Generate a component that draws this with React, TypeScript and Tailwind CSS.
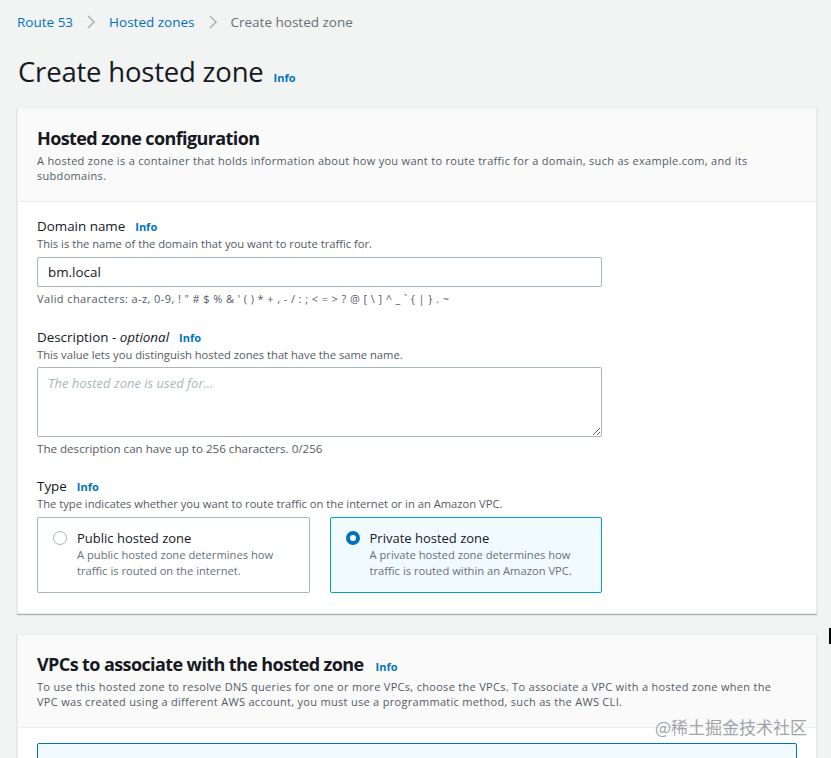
import React from "react";

const font = { fontFamily: '"Open Sans", "Noto Sans", sans-serif' };

function Info({ className = "" }: { className?: string }) {
  return <span className={`ml-[10px] text-[11px] font-bold text-[#0073bb] ${className}`}>Info</span>;
}

function Chevron() {
  return (
    <svg width="12" height="16" viewBox="0 0 12 16" className="mx-[12px]">
      <path d="M3 2 L9 8 L3 14" fill="none" stroke="#aab7b8" strokeWidth="1.6" />
    </svg>
  );
}

function Radio({ checked }: { checked: boolean }) {
  if (checked) {
    return <span className="block h-[14px] w-[14px] shrink-0 rounded-full border-[4px] border-[#0073bb] bg-white" />;
  }
  return <span className="block h-[14px] w-[14px] shrink-0 rounded-full border border-[#aab7b8] bg-white" />;
}

function Tile({ title, desc, checked }: { title: string; desc: string; checked: boolean }) {
  return (
    <div
      className={`flex h-[76px] gap-[10px] rounded-[2px] border px-[15px] pt-[12px] ${
        checked ? "border-[#00a1c9] bg-[#f1faff]" : "border-[#aab7b8] bg-white"
      }`}
    >
      <div className="pt-[1px]">
        <Radio checked={checked} />
      </div>
      <div>
        <div className="text-[13px] leading-[16px] text-[#16191f]">{title}</div>
        <div className="mt-[1px] w-[225px] text-[11.2px] leading-[16px] text-[#687078]">{desc}</div>
      </div>
    </div>
  );
}

export default function App() {
  return (
    <div className="relative min-h-[758px] overflow-hidden bg-[#f2f3f3] pl-[17px] pr-[14px] text-[#16191f]" style={font}>
      {/* breadcrumb */}
      <div className="flex h-[18px] items-center pt-[13px] text-[13.5px] leading-[18px]" style={{ boxSizing: "content-box" }}>
        <span className="text-[#0073bb]">Route 53</span>
        <Chevron />
        <span className="text-[#0073bb]">Hosted zones</span>
        <Chevron />
        <span className="text-[#687078]">Create hosted zone</span>
      </div>

      <div className="mt-[23px] flex h-[36px] items-baseline pl-[1px]">
        <h1 className="text-[27.5px] leading-[36px] tracking-[-0.2px]">Create hosted zone</h1>
        <Info className="ml-[8px]" />
      </div>

      {/* config card */}
      <div className="mt-[17px] border border-[#eaeded] bg-white shadow-[0_1px_1px_0_rgba(0,28,36,0.3)]">
        <div className="border-b border-[#eaeded] bg-[#fafafa] px-[19px] pb-[18px] pt-[18px]">
          <h2 className="text-[18px] font-bold leading-[24px] tracking-[-0.6px]">Hosted zone configuration</h2>
          <p className="mt-[3px] text-[11px] leading-[15px] tracking-[0.3px] text-[#545b64]">
            A hosted zone is a container that holds information about how you want to route traffic for a domain, such as example.com, and its
            <br />
            subdomains.
          </p>
        </div>

        <div className="px-[19px] pb-[20px] pt-[15px]">
          <div className="w-[565px]">
            <div className="flex items-baseline text-[13.4px] leading-[18px]">
              <span>Domain name</span>
              <Info />
            </div>
            <div className="text-[11.2px] leading-[16px] text-[#545b64]">This is the name of the domain that you want to route traffic for.</div>
            <div className="mt-[5px] flex h-[30px] items-center rounded-[2px] border border-[#aab7b8] px-[10px] text-[13.4px]">bm.local</div>
            <div className="mt-[4px] text-[11px] leading-[16px] tracking-[0.4px] text-[#545b64]">
              Valid characters: a-z, 0-9, ! " # $ % &amp; ' ( ) * + , - / : ; &lt; = &gt; ? @ [ \ ] ^ _ ` {"{"} | {"}"} . ~
            </div>

            <div className="mt-[21px] flex items-baseline text-[13.4px] leading-[18px]">
              <span>
                Description - <i>optional</i>
              </span>
              <Info />
            </div>
            <div className="text-[11.2px] leading-[16px] text-[#545b64]">This value lets you distinguish hosted zones that have the same name.</div>
            <textarea
              className="mt-[4px] block h-[70px] w-full rounded-[2px] border border-[#aab7b8] px-[10px] py-[6px] text-[13px] italic leading-[18px] placeholder:text-[#aab7b8]"
              style={font}
              placeholder="The hosted zone is used for..."
            />
            <div className="mt-[4px] text-[11.6px] leading-[16px] text-[#545b64]">The description can have up to 256 characters. 0/256</div>

            <div className="mt-[20px] flex items-baseline text-[13.4px] leading-[18px]">
              <span>Type</span>
              <Info />
            </div>
            <div className="text-[11.2px] leading-[16px] text-[#545b64]">The type indicates whether you want to route traffic on the internet or in an Amazon VPC.</div>
            <div className="mt-[5px] grid grid-cols-2 gap-[20px]">
              <Tile checked={false} title="Public hosted zone" desc="A public hosted zone determines how traffic is routed on the internet." />
              <Tile checked title="Private hosted zone" desc="A private hosted zone determines how traffic is routed within an Amazon VPC." />
            </div>
          </div>
        </div>
      </div>

      {/* vpc card */}
      <div className="mt-[20px] border border-[#eaeded] bg-white shadow-[0_1px_1px_0_rgba(0,28,36,0.3)]">
        <div className="border-b border-[#eaeded] bg-[#fafafa] px-[19px] pb-[18px] pt-[17px]">
          <div className="flex items-baseline">
            <h2 className="text-[18px] font-bold leading-[24px] tracking-[-0.6px]">VPCs to associate with the hosted zone</h2>
            <Info className="ml-[12px]" />
          </div>
          <p className="mt-[3px] text-[11px] leading-[15px] tracking-[0.3px] text-[#545b64]">
            To use this hosted zone to resolve DNS queries for one or more VPCs, choose the VPCs. To associate a VPC with a hosted zone when the
            <br />
            VPC was created using a different AWS account, you must use a programmatic method, such as the AWS CLI.
          </p>
        </div>
        <div className="px-[19px] pt-[15px]">
          <div className="h-[40px] rounded-[2px] border border-[#0073bb] bg-[#f1faff]" />
        </div>
      </div>

      {/* watermark */}
      <div
        className="absolute left-[655px] top-[716px] text-[17px] leading-[22px] text-[#8a8f94] opacity-80"
        style={{ fontFamily: '"Noto Sans CJK SC", sans-serif' }}
      >
        @稀土掘金技术社区
      </div>
      <div className="absolute right-0 top-[628px] h-[16px] w-[2px] bg-black" />
    </div>
  );
}
